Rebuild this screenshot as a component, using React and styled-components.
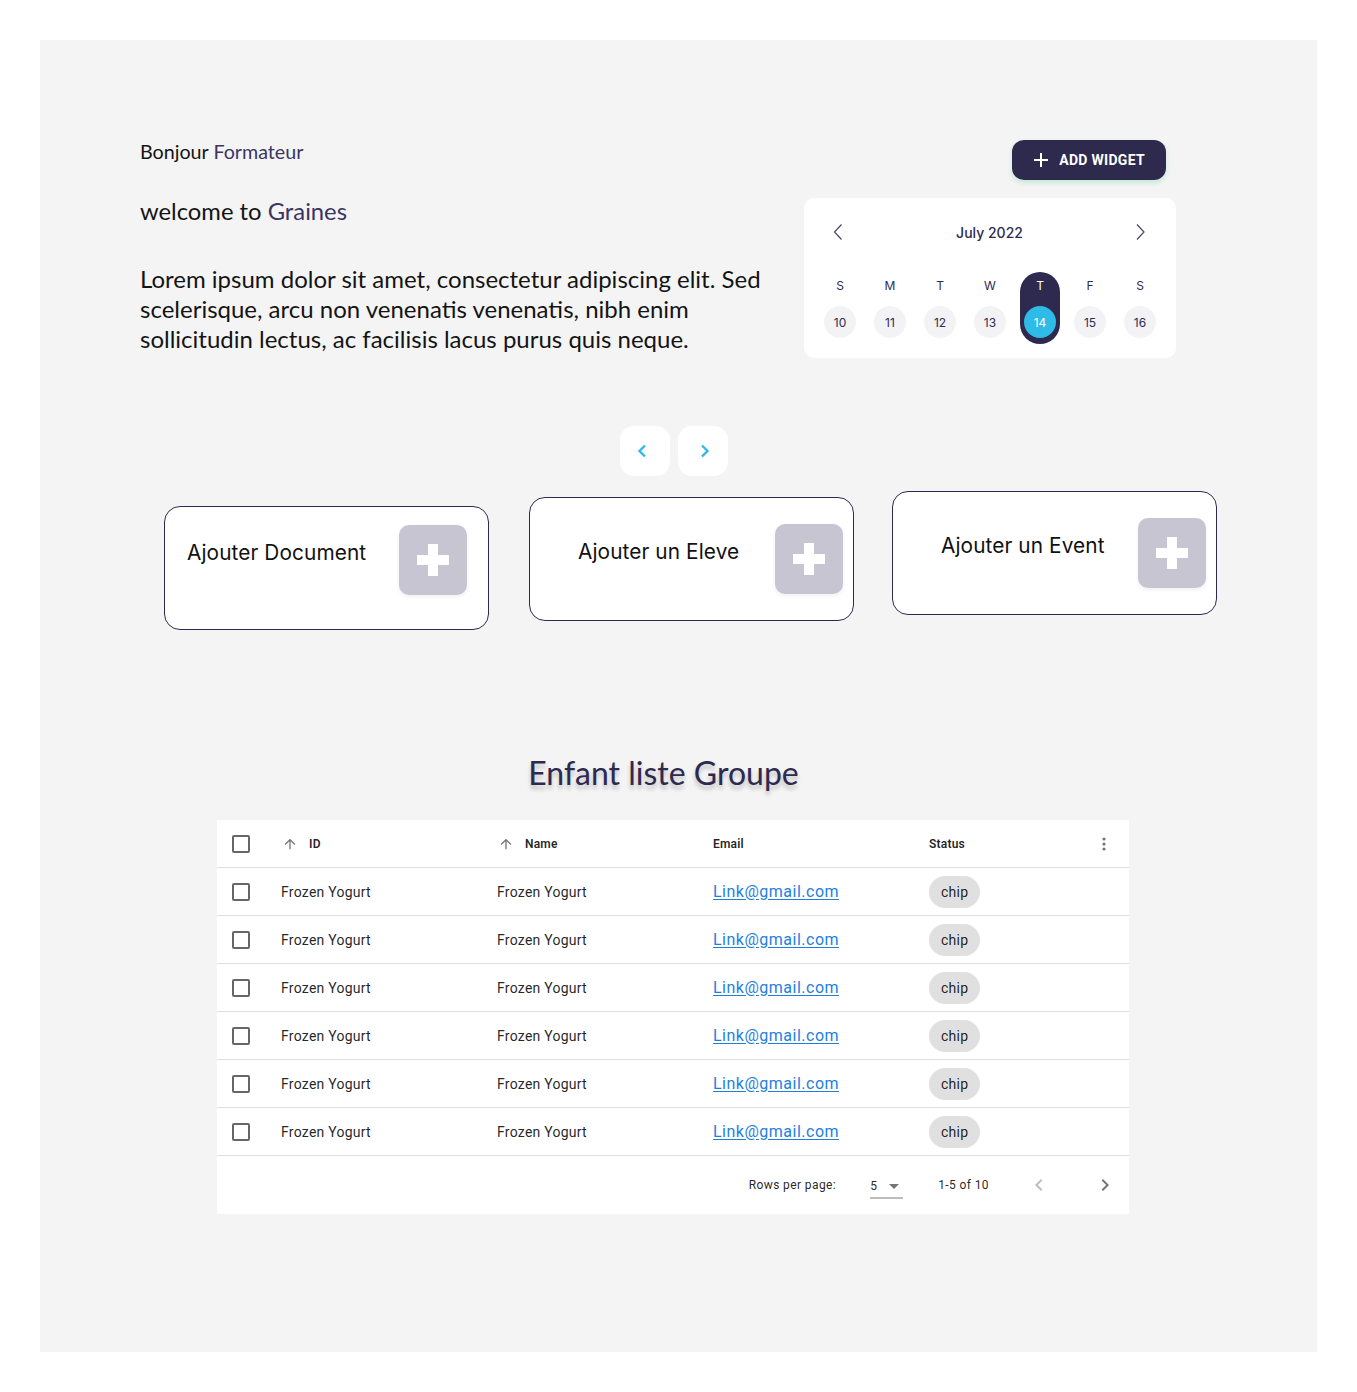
import React from "react";
import styled, { createGlobalStyle } from "styled-components";

const Global = createGlobalStyle`
  html, body { margin: 0; padding: 0; background: #ffffff; }
  * { box-sizing: border-box; }
`;

const Panel = styled.div`
  margin: 40px;
  height: 1312px;
  background: #f4f4f4;
  padding-top: 100px;
  font-family: "Lato", "Noto Sans", sans-serif;
`;

const Top = styled.section`
  display: flex;
  justify-content: space-between;
  align-items: flex-start;
  padding: 0 141px 0 100px;
`;

const Intro = styled.div`
  display: flex;
  flex-direction: column;
  color: #141414;
`;

const Greeting = styled.div`
  font-size: 19.7px;
  line-height: 24px;
`;

const Welcome = styled.div`
  margin-top: 32px;
  font-size: 23.8px;
  line-height: 30px;
`;

const Accent = styled.span`
  color: #3b3563;
`;

const Lorem = styled.p`
  margin: 38px 0 0;
  font-size: 24px;
  line-height: 30px;
`;

const Side = styled.div`
  width: 372px;
  display: flex;
  flex-direction: column;
  align-items: flex-end;
`;

const AddButton = styled.button`
  margin-right: 10px;
  height: 40px;
  padding: 0 21px 0 21px;
  border: none;
  border-radius: 12px;
  background: #2d2a4e;
  color: #fff;
  display: flex;
  align-items: center;
  gap: 10px;
  font-family: "Roboto", sans-serif;
  font-weight: 700;
  font-size: 14px;
  letter-spacing: 0.3px;
  box-shadow: 0 3px 5px rgba(80, 200, 140, 0.25);
`;

const Calendar = styled.div`
  margin-top: 18px;
  width: 372px;
  height: 160px;
  background: #fff;
  border-radius: 10px;
  padding: 22px 11px 14px;
  font-family: "Inter", sans-serif;
  color: #2e2a4f;
`;

const CalHeader = styled.div`
  height: 24px;
  display: flex;
  align-items: center;
  justify-content: space-between;
  padding: 0 19px 0 18px;
  font-size: 14px;
  font-weight: 500;
`;

const Week = styled.div`
  margin-top: 28px;
  display: grid;
  grid-template-columns: repeat(7, 50px);
`;

const DayCol = styled.div`
  justify-self: center;
  width: 40px;
  height: 72px;
  border-radius: 20px;
  padding: 4px 4px 6px;
  display: flex;
  flex-direction: column;
  align-items: center;
  background: ${(p) => (p.$active ? "#2e2a4f" : "transparent")};
`;

const DayLetter = styled.div`
  height: 20px;
  line-height: 20px;
  font-size: 12px;
  color: ${(p) => (p.$active ? "#ffffff" : "#2e2a4f")};
`;

const DayNum = styled.div`
  margin-top: 10px;
  width: 32px;
  height: 32px;
  border-radius: 50%;
  display: flex;
  align-items: center;
  justify-content: center;
  font-size: 12px;
  background: ${(p) => (p.$active ? "#2fbbe8" : "#f3f3f6")};
  color: ${(p) => (p.$active ? "#ffffff" : "#2e2a4f")};
`;

const NavRow = styled.div`
  margin-top: 68px;
  display: flex;
  justify-content: center;
  gap: 8px;
  padding-right: 9px;
`;

const NavButton = styled.button`
  width: 50px;
  height: 50px;
  border: none;
  border-radius: 14px;
  background: #fff;
  display: flex;
  align-items: center;
  justify-content: center;
  padding: ${(p) => (p.$dir === "left" ? "0 6px 0 0" : "0 0 0 4px")};
`;

const Cards = styled.div`
  margin-top: 15px;
  display: flex;
  align-items: flex-start;
  padding-left: 124px;
  gap: 40px;
`;

const Card = styled.div`
  width: 325px;
  height: 124px;
  margin-top: ${(p) => p.$offset}px;
  margin-left: ${(p) => p.$shift || 0}px;
  background: #fff;
  border: 1px solid #2e2a4f;
  border-radius: 16px;
  display: flex;
  align-items: flex-start;
  justify-content: space-between;
  padding: ${(p) => p.$pad};
  font-family: "Inter", "Open Sans", sans-serif;
`;

const CardLabel = styled.div`
  margin-top: 13px;
  font-size: 20.8px;
  line-height: 30px;
  color: #111;
  letter-spacing: 0.1px;
`;

const PlusBox = styled.div`
  width: 68px;
  height: 70px;
  border-radius: 10px;
  background: #c7c5d1;
  display: flex;
  align-items: center;
  justify-content: center;
  box-shadow: 0 2px 4px rgba(0, 0, 0, 0.06);
`;

const Title = styled.h2`
  margin: 123px 0 0;
  padding-right: 30px;
  text-align: center;
  font-weight: 400;
  font-size: 32px;
  line-height: 40px;
  color: #2e2a4f;
  text-shadow: 0 4px 4px rgba(0, 0, 0, 0.22);
`;

const Table = styled.div`
  margin: 27px 0 0 177px;
  width: 912px;
  background: #fff;
  font-family: "Roboto", sans-serif;
  color: rgba(0, 0, 0, 0.87);
`;

const Row = styled.div`
  display: grid;
  grid-template-columns: 64px 216px 216px 216px 1fr;
  align-items: center;
  height: 48px;
  border-bottom: 1px solid #e0e0e0;
  font-size: ${(p) => (p.$head ? "12px" : "14px")};
  font-weight: ${(p) => (p.$head ? 600 : 400)};
  letter-spacing: ${(p) => (p.$head ? "0.2px" : "0.25px")};
`;

const Cell = styled.div`
  display: flex;
  align-items: center;
  padding-left: ${(p) => p.$pl || 0}px;
  padding-right: ${(p) => p.$pr || 0}px;
  justify-content: ${(p) => (p.$between ? "space-between" : "flex-start")};
`;

const Check = styled.span`
  width: 18px;
  height: 18px;
  border: 2px solid rgba(0, 0, 0, 0.6);
  border-radius: 2px;
  display: inline-block;
`;

const SortIcon = styled.svg`
  width: 16px;
  height: 16px;
  margin-right: 11px;
  margin-left: 1px;
`;

const Link = styled.a`
  color: #1e7fe0;
  font-size: 16px;
  text-decoration: underline;
  text-underline-offset: 2px;
  letter-spacing: 0.5px;
`;

const Chip = styled.span`
  height: 32px;
  padding: 0 12px;
  border-radius: 16px;
  background: #e0e0e0;
  display: inline-flex;
  align-items: center;
  font-size: 14px;
`;

const Footer = styled.div`
  height: 58px;
  display: flex;
  align-items: center;
  justify-content: flex-end;
  padding-right: 12px;
  font-size: 12px;
  letter-spacing: 0.4px;
`;

const Select = styled.div`
  margin-left: 34px;
  width: 33px;
  height: 26px;
  display: flex;
  align-items: center;
  justify-content: space-between;
  border-bottom: 2px solid #bdbdbd;
  padding-top: 2px;
  margin-top: 2px;
`;

const Range = styled.span`
  margin-left: 35px;
`;

const Actions = styled.div`
  margin-left: 38px;
  display: flex;
  gap: 42px;
`;

const Chevron = ({ dir = "left", color = "#2fb8e9" }) => (
  <svg width="10" height="16" viewBox="0 0 10 16" fill="none">
    <path
      d={dir === "left" ? "M8 2.5 2.5 8 8 13.5" : "M2 2.5 7.5 8 2 13.5"}
      stroke={color}
      strokeWidth="2.4"
    />
  </svg>
);

const CalChevron = ({ dir = "left" }) => (
  <svg width="10" height="16" viewBox="0 0 10 16" fill="none">
    <path
      d={dir === "left" ? "M8.5 0.5 1.5 8l7 7.5" : "M1 0.5 8 8l-7 7.5"}
      stroke="#4a4668"
      strokeWidth="1.2"
    />
  </svg>
);

const BigPlus = () => (
  <svg width="32" height="32" viewBox="0 0 32 32">
    <rect x="11" y="0" width="10" height="32" fill="#fff" />
    <rect x="0" y="11" width="32" height="10" fill="#fff" />
  </svg>
);

const days = [
  ["S", 10],
  ["M", 11],
  ["T", 12],
  ["W", 13],
  ["T", 14],
  ["F", 15],
  ["S", 16],
];

const ArrowUp = () => (
  <SortIcon viewBox="0 0 24 24">
    <path d="M4 12l1.41 1.41L11 7.83V20h2V7.83l5.58 5.59L20 12l-8-8-8 8z" fill="rgba(0,0,0,0.54)" />
  </SortIcon>
);

export default function App() {
  return (
    <>
      <Global />
      <Panel>
        <Top>
          <Intro>
            <Greeting>
              Bonjour <Accent>Formateur</Accent>
            </Greeting>
            <Welcome>
              welcome to <Accent>Graines</Accent>
            </Welcome>
            <Lorem>
              Lorem ipsum dolor sit amet, consectetur adipiscing elit. Sed
              <br />
              scelerisque, arcu non venenatis venenatis, nibh enim
              <br />
              sollicitudin lectus, ac facilisis lacus purus quis neque.
            </Lorem>
          </Intro>
          <Side>
            <AddButton>
              <svg width="16" height="16" viewBox="0 0 16 16">
                <path d="M8 1v14M1 8h14" stroke="#fff" strokeWidth="2" />
              </svg>
              ADD WIDGET
            </AddButton>
            <Calendar>
              <CalHeader>
                <CalChevron dir="left" />
                <span>July 2022</span>
                <CalChevron dir="right" />
              </CalHeader>
              <Week>
                {days.map(([l, n]) => (
                  <DayCol key={n} $active={n === 14}>
                    <DayLetter $active={n === 14}>{l}</DayLetter>
                    <DayNum $active={n === 14}>{n}</DayNum>
                  </DayCol>
                ))}
              </Week>
            </Calendar>
          </Side>
        </Top>

        <NavRow>
          <NavButton $dir="left" aria-label="previous">
            <Chevron dir="left" />
          </NavButton>
          <NavButton $dir="right" aria-label="next">
            <Chevron dir="right" />
          </NavButton>
        </NavRow>

        <Cards>
          <Card $offset={15} $pad="18px 21px 0 22px">
            <CardLabel>Ajouter Document</CardLabel>
            <PlusBox>
              <BigPlus />
            </PlusBox>
          </Card>
          <Card $offset={6} $pad="26px 10px 0 48px">
            <CardLabel>Ajouter un Eleve</CardLabel>
            <PlusBox>
              <BigPlus />
            </PlusBox>
          </Card>
          <Card $offset={0} $shift={-2} $pad="26px 10px 0 48px">
            <CardLabel>Ajouter un Event</CardLabel>
            <PlusBox>
              <BigPlus />
            </PlusBox>
          </Card>
        </Cards>

        <Title>Enfant liste Groupe</Title>

        <Table>
          <Row $head>
            <Cell $pl={15}>
              <Check />
            </Cell>
            <Cell>
              <ArrowUp />
              ID
            </Cell>
            <Cell>
              <ArrowUp />
              Name
            </Cell>
            <Cell>Email</Cell>
            <Cell $between $pr={22}>
              Status
              <svg width="6" height="16" viewBox="0 0 6 16">
                <circle cx="3" cy="3" r="1.6" fill="rgba(0,0,0,0.54)" />
                <circle cx="3" cy="8" r="1.6" fill="rgba(0,0,0,0.54)" />
                <circle cx="3" cy="13" r="1.6" fill="rgba(0,0,0,0.54)" />
              </svg>
            </Cell>
          </Row>
          {Array.from({ length: 6 }).map((_, i) => (
            <Row key={i}>
              <Cell $pl={15}>
                <Check />
              </Cell>
              <Cell>Frozen Yogurt</Cell>
              <Cell>Frozen Yogurt</Cell>
              <Cell>
                <Link href="#">Link@gmail.com</Link>
              </Cell>
              <Cell>
                <Chip>chip</Chip>
              </Cell>
            </Row>
          ))}
          <Footer>
            <span>Rows per page:</span>
            <Select>
              <span>5</span>
              <svg width="10" height="5" viewBox="0 0 10 5" style={{ marginRight: 4 }}>
                <path d="M0 0h10L5 5z" fill="rgba(0,0,0,0.54)" />
              </svg>
            </Select>
            <Range>1-5 of 10</Range>
            <Actions>
              <svg width="24" height="24" viewBox="0 0 24 24">
                <path d="M15.41 7.41 14 6l-6 6 6 6 1.41-1.41L10.83 12z" fill="rgba(0,0,0,0.26)" />
              </svg>
              <svg width="24" height="24" viewBox="0 0 24 24">
                <path d="M10 6 8.59 7.41 13.17 12l-4.58 4.59L10 18l6-6z" fill="rgba(0,0,0,0.54)" />
              </svg>
            </Actions>
          </Footer>
        </Table>
      </Panel>
    </>
  );
}
